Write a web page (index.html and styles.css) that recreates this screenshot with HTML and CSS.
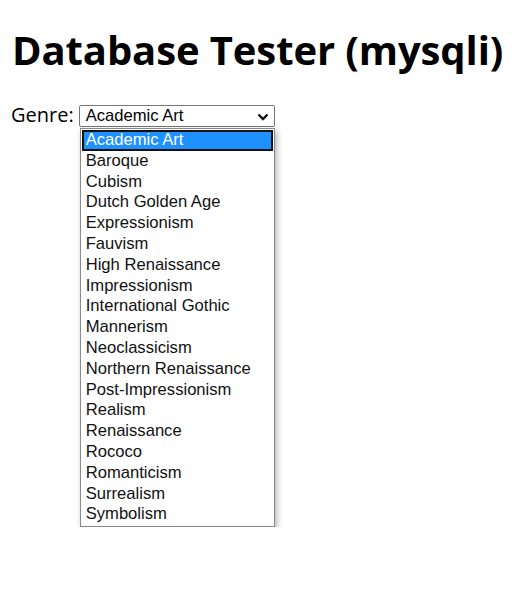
FILE: index.html
```html
<!DOCTYPE html>
<html lang="en">
<head>
    <meta charset="UTF-8">
    <title>Database Tester (mysqli)</title>
    <link rel="stylesheet" href="styles.css">
</head>
<body>
    <h1 class="title">Database Tester (mysqli)</h1>
    <form class="genre-form">
        <label class="genre-label" for="genre">Genre:</label>
        <div class="picker">
            <div class="select" id="genre">
                <span>Academic Art</span>
                <svg class="chevron" width="12" height="8" viewBox="0 0 12 8">
                    <path d="M1.5 1.5 L6 6 L10.5 1.5" fill="none" stroke="#111" stroke-width="2.4"/>
                </svg>
            </div>
            <ul class="options">
                <li class="option selected">Academic Art</li>
                <li class="option">Baroque</li>
                <li class="option">Cubism</li>
                <li class="option">Dutch Golden Age</li>
                <li class="option">Expressionism</li>
                <li class="option">Fauvism</li>
                <li class="option">High Renaissance</li>
                <li class="option">Impressionism</li>
                <li class="option">International Gothic</li>
                <li class="option">Mannerism</li>
                <li class="option">Neoclassicism</li>
                <li class="option">Northern Renaissance</li>
                <li class="option">Post-Impressionism</li>
                <li class="option">Realism</li>
                <li class="option">Renaissance</li>
                <li class="option">Rococo</li>
                <li class="option">Romanticism</li>
                <li class="option">Surrealism</li>
                <li class="option">Symbolism</li>
            </ul>
        </div>
    </form>
</body>
</html>
```

FILE: styles.css
```css
body {
    margin: 0;
    padding: 0 11px;
    font-family: "Open Sans", "Noto Sans", sans-serif;
    color: #000;
    background: #fff;
}
.title {
    font-size: 40px;
    font-weight: bold;
    margin: 23px 0 28px 1px;
    line-height: 54px;
    letter-spacing: -0.1px;
}
.genre-form {
    display: flex;
    align-items: flex-start;
    gap: 5px;
    font-size: 20px;
}
.genre-label {
    line-height: 24px;
    margin-top: -2px;
}
.picker {
    display: flex;
    flex-direction: column;
    width: 196px;
}
.select {
    display: flex;
    align-items: center;
    justify-content: space-between;
    height: 20px;
    border: 1px solid #767676;
    border-radius: 2px;
    padding: 0 5px 0 6px;
    font-family: "Liberation Sans", Arial, sans-serif;
    font-size: 16.6px;
    color: #000;
}
.chevron {
    margin-top: 1px;
}
.options {
    list-style: none;
    margin: 1px 0 0 1px;
    padding: 1px;
    width: 191px;
    border: 1px solid #8a8a8a;
    box-shadow: 2px 3px 6px rgba(0, 0, 0, 0.3);
    font-family: "Liberation Sans", Arial, sans-serif;
    font-size: 16.6px;
}
.option {
    height: 20.8px;
    line-height: 20.8px;
    padding-left: 4px;
    color: #111;
}
.option.selected {
    background: #1e90ff;
    color: #fff;
    outline: 2px solid #111;
    outline-offset: -2px;
}
```
